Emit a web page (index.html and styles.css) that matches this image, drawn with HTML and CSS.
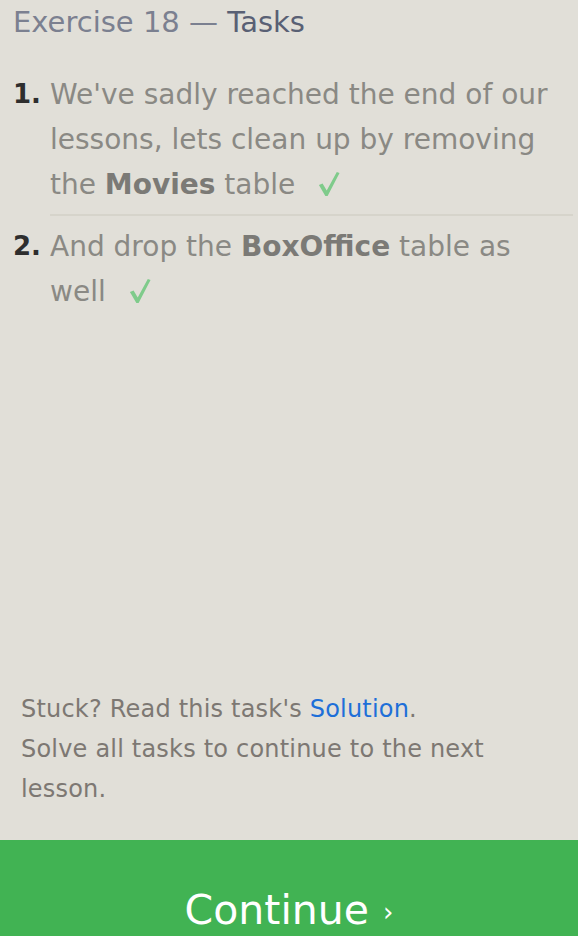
FILE: index.html
```html
<!DOCTYPE html>
<html>
<head>
<meta charset="utf-8">
<link rel="stylesheet" href="styles.css">
</head>
<body>
<div class="page">
  <h1 class="title">Exercise 18 — <span class="title-strong">Tasks</span></h1>
  <ol class="tasks">
    <li class="task">
      <span class="num">1.</span>
      <span class="text">We've sadly reached the end of our lessons, lets clean up by removing the <b>Movies</b> table <svg class="check" viewBox="0 0 24 28" width="22" height="26"><polygon points="1,15 5,13.5 9.5,21 20.5,1 23.5,2 10.5,27 8,27" fill="#7fcb8b"/></svg></span>
    </li>
    <li class="task">
      <span class="num">2.</span>
      <span class="text">And drop the <b>BoxOffice</b> table as well <svg class="check" viewBox="0 0 24 28" width="22" height="26"><polygon points="1,15 5,13.5 9.5,21 20.5,1 23.5,2 10.5,27 8,27" fill="#7fcb8b"/></svg></span>
    </li>
  </ol>
  <div class="footer">
    <p class="line">Stuck? Read this task's <a class="link" href="#">Solution</a>.</p>
    <p class="line">Solve all tasks to continue to the next lesson.</p>
  </div>
</div>
<div class="continue">
  <span class="continue-label">Continue</span><span class="chev">›</span>
</div>
</body>
</html>
```

FILE: styles.css
```css
html, body {
  margin: 0;
  padding: 0;
  background: #e1dfd8;
  font-family: "DejaVu Sans", sans-serif;
}

.page {
  height: 840px;
  display: flex;
  flex-direction: column;
  box-sizing: border-box;
}

.title {
  margin: 0;
  padding: 0 0 0 13px;
  font-size: 29px;
  line-height: 44px;
  font-weight: normal;
  color: #7b8090;
}

.title-strong {
  color: #596074;
}

.tasks {
  list-style: none;
  margin: 28px 0 0 0;
  padding: 0;
}

.task {
  display: grid;
  grid-template-columns: 37px 1fr;
  font-size: 28px;
  line-height: 45px;
  padding-left: 13px;
  padding-right: 5px;
}

.task:first-child .text {
  padding-bottom: 7px;
  border-bottom: 2px solid #d6d4cb;
}

.task:first-child + .task {
  padding-top: 8px;
}

.num {
  color: #2e2e2e;
  font-weight: bold;
  font-size: 26px;
}

.text {
  color: #8a8984;
}

.text b {
  color: #7b7a76;
  font-weight: bold;
}

.check {
  display: inline-block;
  vertical-align: -3px;
  margin-left: 14px;
}

.footer {
  margin-top: auto;
  padding: 0 20px 31px 21px;
}

.line {
  margin: 0;
  font-size: 24px;
  letter-spacing: 0.2px;
  line-height: 40px;
  color: #7d7873;
}

.link {
  color: #1e6fd8;
  text-decoration: none;
}

.continue {
  background: #41b353;
  height: 140px;
  display: flex;
  justify-content: center;
  align-items: center;
  color: #ffffff;
}

.continue-label {
  font-size: 41px;
}

.chev {
  font-size: 26px;
  margin-left: 14px;
  margin-top: 4px;
}
```
